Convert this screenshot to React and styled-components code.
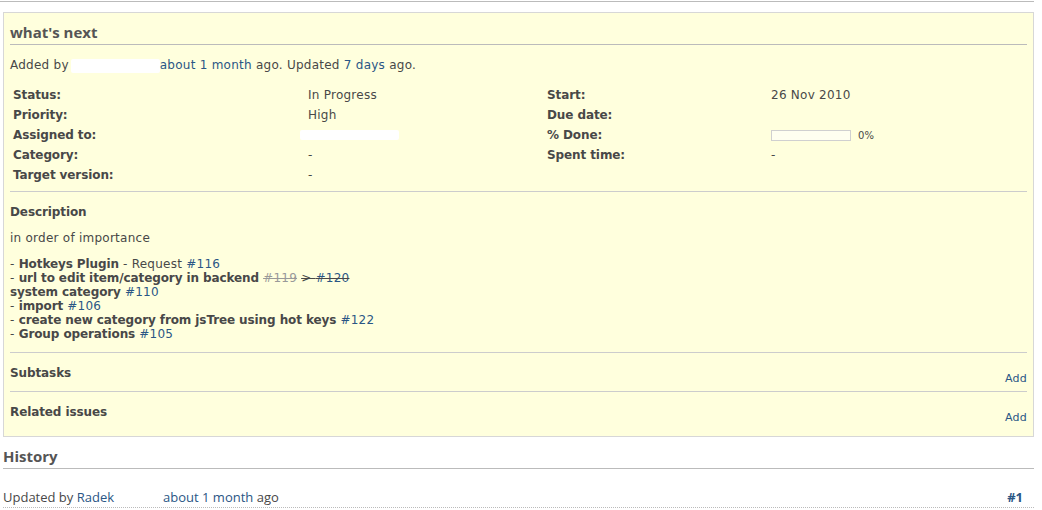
import React from "react";
import styled, { createGlobalStyle } from "styled-components";

const GlobalStyle = createGlobalStyle`
  html, body { margin: 0; padding: 0; background: #fff; }
  body {
    font-family: "DejaVu Sans", Verdana, sans-serif;
    font-size: 12px;
    letter-spacing: 0.25px;
    color: #484848;
  }
  strong, b { letter-spacing: -0.1px; }
`;

const Page = styled.div`
  width: 1034px;
`;

const TopRule = styled.div`
  margin-top: 1px;
  height: 1px;
  background: #bbb;
`;

const Content = styled.div`
  padding-left: 3px;
`;

const IssueBox = styled.div`
  margin-top: 10px;
  background: #ffffdd;
  border: 1px solid #d7d7d7;
  padding: 6px 6px 6px;
`;

const Heading = styled.h3`
  margin: ${(p) => p.$top}px 0 0;
  font-family: "Open Sans", "Trebuchet MS", sans-serif;
  font-weight: 700;
  font-size: 15px;
  letter-spacing: 0;
  line-height: 20px;
  padding-bottom: 2px;
  border-bottom: 1px solid #bbb;
  color: #555;
`;

const Author = styled.p`
  margin: 11px 0 0;
  line-height: 18px;
`;

const Link = styled.a`
  color: #2a5685;
  text-decoration: none;
`;

const Redacted = styled.span`
  display: inline-block;
  vertical-align: middle;
  width: ${(p) => p.$w}px;
  height: ${(p) => p.$h}px;
  margin-left: ${(p) => p.$ml || 0}px;
  background: #fff;
  border-radius: 2px;
`;

const Attributes = styled.div`
  margin-top: 11px;
  display: grid;
  grid-template-columns: 295px 239px 224px 1fr;
  grid-auto-rows: 20px;
  align-items: center;
`;

const Label = styled.div`
  font-weight: 700;
  letter-spacing: -0.1px;
  padding-left: 3px;
`;

const Value = styled.div`
  padding-left: 3px;
  display: flex;
  align-items: center;
`;

const Progress = styled.span`
  display: inline-block;
  width: 78px;
  height: 9px;
  border: 1px solid #d0d0d0;
  background: #fffff0;
`;

const Percent = styled.span`
  margin-left: 7px;
  font-size: 10px;
`;

const Divider = styled.hr`
  margin: 6px 0 0;
  border: none;
  border-top: 1px solid #ccc;
  height: 0;
`;

const Strong = styled.p`
  margin: 11px 0 0;
  font-weight: 700;
  letter-spacing: -0.1px;
  line-height: 18px;
`;

const Intro = styled.p`
  margin: 8px 0 0;
  line-height: 18px;
`;

const List = styled.div`
  margin-top: 10px;
  line-height: 14px;
`;

const B = styled.strong`
  font-weight: 700;
`;

const Closed = styled.a`
  color: #999;
  text-decoration: line-through;
`;

const Del = styled.del`
  text-decoration: line-through;
  color: #484848;
`;

const Section = styled.div`
  margin-top: ${(p) => p.$top || 0}px;
  border-top: 1px solid #ccc;
  padding: 11px 0 5px;
  display: flex;
  justify-content: space-between;
  align-items: flex-start;
`;

const SectionTitle = styled.div`
  font-weight: 700;
  letter-spacing: -0.1px;
  line-height: 18px;
`;

const AddLink = styled.a`
  margin-top: 8px;
  font-size: 11px;
  line-height: 14px;
  color: #2a5685;
  text-decoration: none;
`;

const JournalHeader = styled.h4`
  margin: 19px 0 0;
  font-family: "Open Sans", "Trebuchet MS", sans-serif;
  font-weight: 400;
  font-size: 13px;
  letter-spacing: 0;
  line-height: 18px;
  padding-bottom: 1px;
  border-bottom: 1px dotted #bbb;
  display: flex;
  justify-content: space-between;
  color: #484848;
`;

const JournalLink = styled.a`
  margin-right: 11px;
  font-weight: 700;
  color: #2a5685;
  text-decoration: none;
`;

const Spacer = styled.span`
  display: inline-block;
  width: ${(p) => p.$w}px;
`;

const attrs = [
  ["Status:", "In Progress", "Start:", "26 Nov 2010"],
  ["Priority:", "High", "Due date:", ""],
  ["Assigned to:", "__redacted__", "% Done:", "__progress__"],
  ["Category:", "-", "Spent time:", "-"],
  ["Target version:", "-", "", ""],
];

function renderValue(v) {
  if (v === "__redacted__") return <Redacted $w={99} $h={10} $ml={-8} />;
  if (v === "__progress__")
    return (
      <>
        <Progress />
        <Percent>0%</Percent>
      </>
    );
  return v;
}

export default function App() {
  return (
    <Page>
      <GlobalStyle />
      <TopRule />
      <Content>
        <IssueBox>
          <Heading $top={3}>what's next</Heading>
          <Author>
            Added by<Redacted $w={89} $h={14} $ml={2} />
            <Link href="#">about 1 month</Link> ago. Updated{" "}
            <Link href="#">7 days</Link> ago.
          </Author>
          <Attributes>
            {attrs.map((row, i) => (
              <React.Fragment key={i}>
                <Label>{row[0]}</Label>
                <Value>{renderValue(row[1])}</Value>
                <Label>{row[2]}</Label>
                <Value>{renderValue(row[3])}</Value>
              </React.Fragment>
            ))}
          </Attributes>
          <Divider />
          <Strong>Description</Strong>
          <Intro>in order of importance</Intro>
          <List>
            <div>
              - <B>Hotkeys Plugin</B> - Request <Link href="#">#116</Link>
            </div>
            <div>
              - <B>url to edit item/category in backend</B>{" "}
              <Closed href="#">#119</Closed>{" "}
              <Del>
                &gt; <Link href="#">#120</Link>
              </Del>
            </div>
            <div>
              <B>system category</B> <Link href="#">#110</Link>
            </div>
            <div>
              - <B>import</B> <Link href="#">#106</Link>
            </div>
            <div>
              - <B>create new category from jsTree using hot keys</B>{" "}
              <Link href="#">#122</Link>
            </div>
            <div>
              - <B>Group operations</B> <Link href="#">#105</Link>
            </div>
          </List>
          <Section $top={11}>
            <SectionTitle>Subtasks</SectionTitle>
            <AddLink href="#">Add</AddLink>
          </Section>
          <Section>
            <SectionTitle>Related issues</SectionTitle>
            <AddLink href="#">Add</AddLink>
          </Section>
        </IssueBox>
        <Heading $top={9}>History</Heading>
        <JournalHeader>
          <span>
            Updated by <Link href="#">Radek</Link>
            <Spacer $w={49} />
            <Link href="#">about 1 month</Link> ago
          </span>
          <JournalLink href="#">#1</JournalLink>
        </JournalHeader>
      </Content>
    </Page>
  );
}
